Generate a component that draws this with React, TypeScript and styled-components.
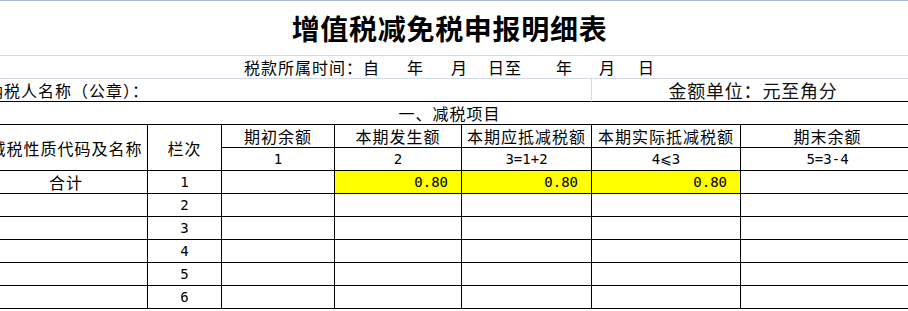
import React from 'react';
import styled, { createGlobalStyle } from 'styled-components';

type LineKind = 'black' | 'grid' | 'none';

const lineColor: Record<LineKind, string> = {
  black: '#000000',
  grid: '#d4dae6',
  none: 'transparent',
};

const GlobalStyle = createGlobalStyle`
  html, body {
    margin: 0;
    padding: 0;
    background: #ffffff;
    overflow: hidden;
  }

  body {
    font-family: "Noto Sans CJK SC", "Noto Sans", sans-serif;
    color: #000000;
  }
`;

const Sheet = styled.div`
  display: grid;
  grid-template-columns: 163px 74px 113px 127px 130px 149px 174px;
  grid-template-rows: 55px;
  grid-auto-rows: 23px;
  width: 930px;
  margin-left: -15px;
  border-top: 1px solid #a3bad6;
`;

interface CellProps {
  $span?: number;
  $rows?: number;
  $align?: 'left' | 'center' | 'right';
  $bottom?: LineKind;
  $right?: LineKind;
  $fill?: string;
  $mono?: boolean;
}

const justify = { left: 'flex-start', center: 'center', right: 'flex-end' };

const Cell = styled.div<CellProps>`
  grid-column: span ${({ $span }) => $span ?? 1};
  grid-row: span ${({ $rows }) => $rows ?? 1};
  box-sizing: border-box;
  display: flex;
  align-items: center;
  justify-content: ${({ $align }) => justify[$align ?? 'center']};
  padding: ${({ $align }) => ($align === 'right' ? '0 13px 0 0' : $align === 'left' ? '0 0 0 2px' : '0')};
  border-bottom: 1px solid ${({ $bottom }) => lineColor[$bottom ?? 'black']};
  border-right: 1px solid ${({ $right }) => lineColor[$right ?? 'black']};
  background: ${({ $fill }) => $fill ?? 'transparent'};
  white-space: nowrap;
  font-family: ${({ $mono }) =>
    $mono ? '"DejaVu Sans Mono", "DejaVu Sans", monospace' : '"Noto Sans CJK SC", sans-serif'};
  font-size: ${({ $mono }) => ($mono ? '14px' : '16px')};
  letter-spacing: ${({ $mono }) => ($mono ? '0' : '1px')};
  line-height: 1;
`;

const Title = styled.h1`
  margin: 0;
  font-family: "Noto Sans CJK SC", sans-serif;
  font-size: 28px;
  font-weight: 700;
  letter-spacing: 0.7px;
  line-height: 1;
`;

const Unit = styled.span`
  font-size: 18px;
  letter-spacing: 0.8px;
  color: #111111;
`;

const DateLine = styled.div`
  display: flex;
  align-items: center;
`;

const Blank = styled.span<{ $w: number }>`
  display: inline-block;
  width: ${({ $w }) => $w}px;
`;

const Word = styled.span`
  letter-spacing: 1px;
`;

const heads = ['期初余额', '本期发生额', '本期应抵减税额', '本期实际抵减税额', '期末余额'];
const codes = ['1', '2', '3=1+2', '4⩽3', '5=3-4'];

const DataRow = ({ label, no, amounts }: { label?: string; no: number; amounts?: string[] }) => (
  <>
    <Cell>{label}</Cell>
    <Cell $mono>{no}</Cell>
    <Cell />
    {[0, 1, 2].map((i) => (
      <Cell key={i} $mono $align="right" $fill={amounts ? '#ffff00' : undefined}>
        {amounts?.[i]}
      </Cell>
    ))}
    <Cell />
  </>
);

const App = () => (
  <>
    <GlobalStyle />
    <Sheet>
      <Cell $span={7} $bottom="grid" $right="none">
        <Title>增值税减免税申报明细表</Title>
      </Cell>

      <Cell $span={7} $bottom="grid" $right="none">
        <DateLine>
          <Word>税款所属时间：自</Word>
          <Blank $w={27} />
          <Word>年</Word>
          <Blank $w={27} />
          <Word>月</Word>
          <Blank $w={20} />
          <Word>日至</Word>
          <Blank $w={34} />
          <Word>年</Word>
          <Blank $w={26} />
          <Word>月</Word>
          <Blank $w={22} />
          <Word>日</Word>
        </DateLine>
      </Cell>

      <Cell $span={5} $align="left" $right="grid">
        纳税人名称（公章）：
      </Cell>
      <Cell $span={2} $right="none">
        <Unit>金额单位：元至角分</Unit>
      </Cell>

      <Cell $span={7} $right="none">
        一、减税项目
      </Cell>

      <Cell $rows={2}>减税性质代码及名称</Cell>
      <Cell $rows={2}>栏次</Cell>
      {heads.map((h) => (
        <Cell key={h}>{h}</Cell>
      ))}
      {codes.map((c) => (
        <Cell key={c} $mono>
          {c}
        </Cell>
      ))}

      <DataRow label="合计" no={1} amounts={['0.80', '0.80', '0.80']} />
      {[2, 3, 4, 5, 6].map((n) => (
        <DataRow key={n} no={n} />
      ))}
    </Sheet>
  </>
);

export default App;
